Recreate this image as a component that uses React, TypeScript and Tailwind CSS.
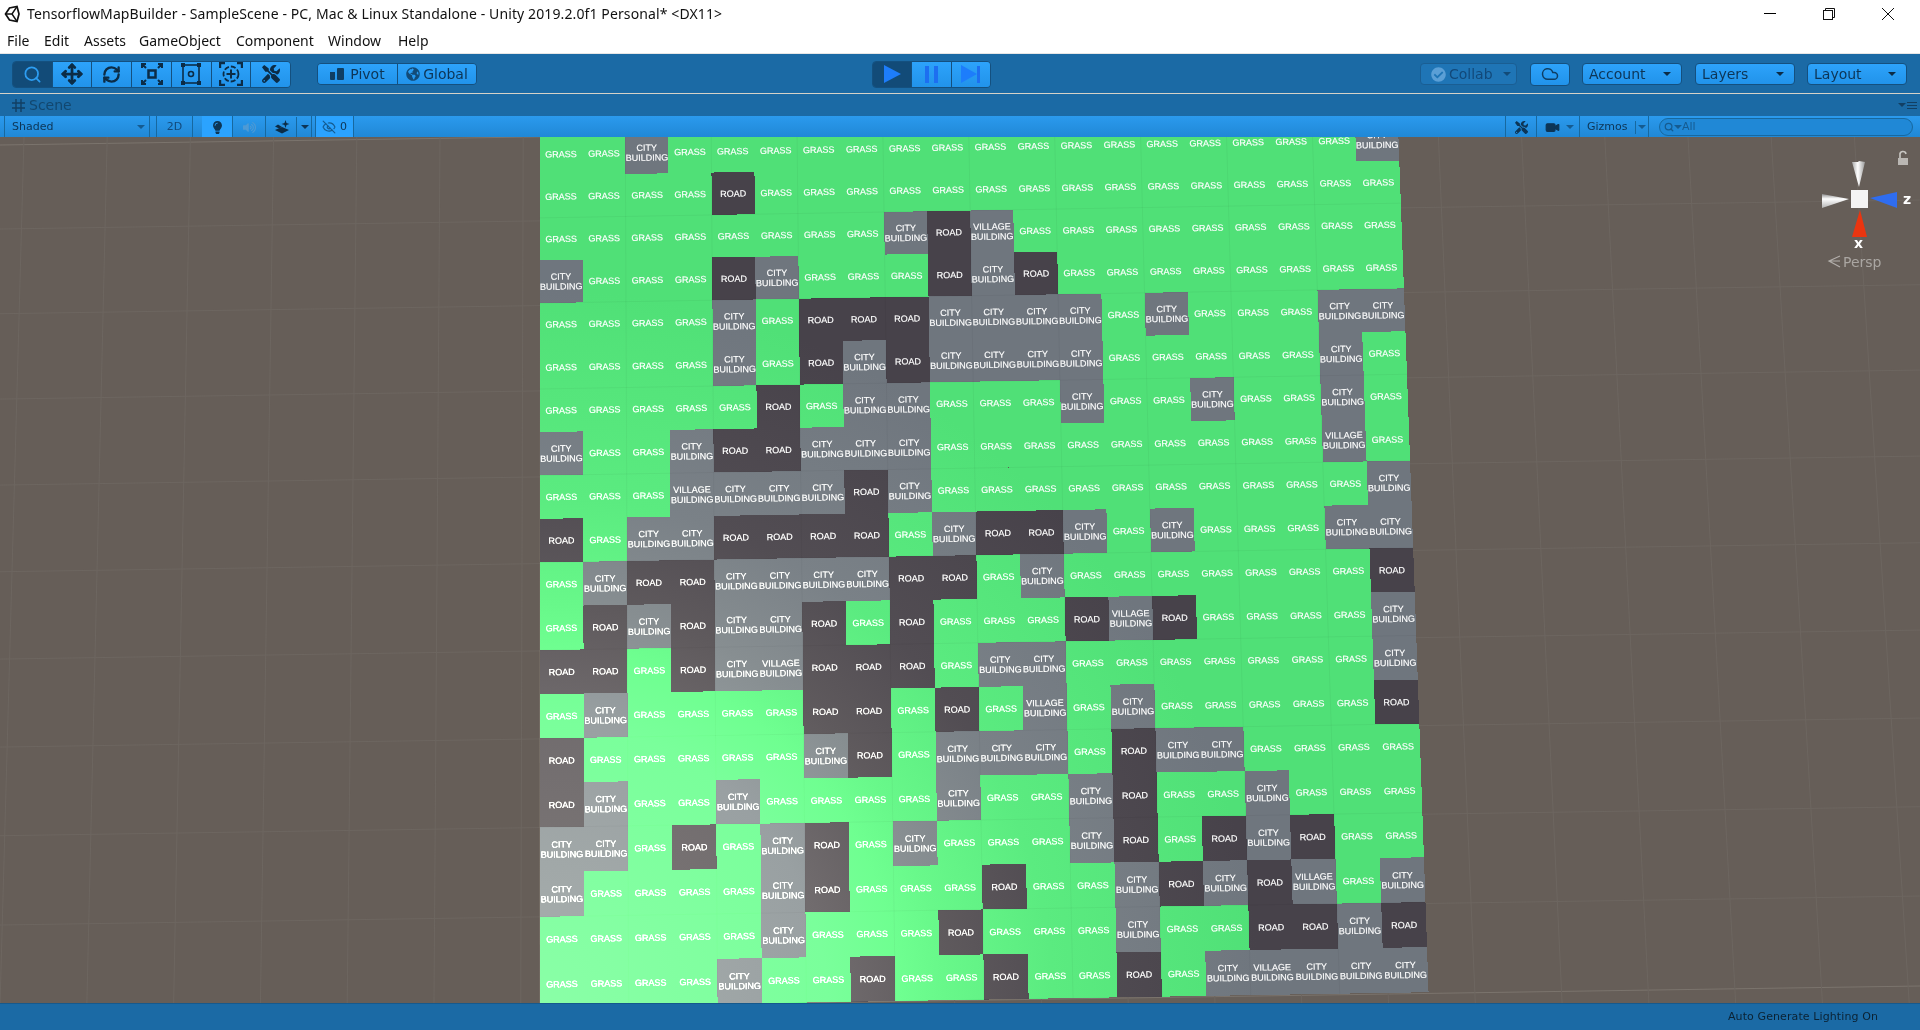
import { Cloud, EyeOff, Move, RefreshCw, Search, Video } from 'lucide-react';
import { FaCheckCircle, FaGlobeAmericas, FaLightbulb, FaTools, FaVolumeUp } from 'react-icons/fa';
import type { ReactNode } from 'react';

const MAP = [
  'GGCGGGGGGGGGGGGGGGGC',
  'GGGGRGGGGGGGGGGGGGGG',
  'GGGGGGGGCRVGGGGGGGGG',
  'CGGGRCGGGRCRGGGGGGGG',
  'GGGGCGRRRCCCCGCGGGCC',
  'GGGGCGRCRCCCCGGGGGCG',
  'GGGGGRGCCGGGCGGCGGCG',
  'CGGCRRCCCGGGGGGGGGVG',
  'GGGVCCCRCGGGGGGGGGGC',
  'RGCCRRRRGCRRCGCGGGCC',
  'GCRRCCCCRRGCGGGGGGGR',
  'GRCRCCRGRGGGRVRGGGGC',
  'RRGRCVRRRGCCGGGGGGGC',
  'GCGGGGRRGRGVGCGGGGGR',
  'RGGGGGCRGCCCGRCCGGGG',
  'RCGGCGGGGCGGCRGGCGGG',
  'CCGRGCRGCGGGCRGRCRGG',
  'CGGGGCRGGGRGGCRCRVGC',
  'GGGGGCGGGRGGGCGGRRCR',
  'GGGGCGGRGGRGGRGCVCCC',
];

const TILE_FILL: Record<string, string> = {
  G: '#50e077',
  C: '#6f767e',
  V: '#6f767e',
  R: '#47424a',
};

const TILE_LABEL: Record<string, string[]> = {
  G: ['GRASS'],
  C: ['CITY', 'BUILDING'],
  V: ['VILLAGE', 'BUILDING'],
  R: ['ROAD'],
};

// fitted against the reference: rows spread out slightly towards the camera
function gridPoint(r: number, c: number) {
  const width = 42.95 + (1.45 * r) / 19;
  return {
    x: 561 + r / 19 + c * width,
    y: 154 + 42.24 * r + 0.076 * r * r - (14 * c) / 19,
  };
}

function quad(r: number, c: number, rows = 1, cols = 1) {
  const corners = [
    gridPoint(r - 0.5, c - 0.5),
    gridPoint(r - 0.5, c - 0.5 + cols),
    gridPoint(r - 0.5 + rows, c - 0.5 + cols),
    gridPoint(r - 0.5 + rows, c - 0.5),
  ];
  return corners.map((p) => `${p.x},${p.y}`).join(' ');
}

function FloorLines() {
  const rows = Array.from({ length: 11 }, (_, n) => 145 + 83.7 * n + 0.33 * n * n);
  const cols = Array.from({ length: 23 }, (_, n) => 24 + 83.2 * n);
  return (
    <g>
      {rows.map((y, n) => (
        <line key={n} x1={0} y1={y} x2={1920} y2={y - 29} stroke={n % 10 === 0 ? '#7b746d' : '#6d6660'} strokeWidth={1} />
      ))}
      {cols.map((x, n) => (
        <line key={n} x1={x} y1={137} x2={x + (x - 580) * 0.043} y2={1003} stroke="#6d6660" strokeWidth={1} />
      ))}
    </g>
  );
}

function MapTiles() {
  const tiles = MAP.flatMap((row, r) => row.split('').map((kind, c) => ({ kind, r, c })));
  const seams = Array.from({ length: 9 }, (_, n) => 1.5 + n * 2);
  return (
    <g>
      {tiles.map(({ kind, r, c }) => (
        <polygon key={`${r}-${c}`} points={quad(r, c)} fill={TILE_FILL[kind]} shapeRendering="crispEdges" />
      ))}
      {seams.map((n) => {
        const a = gridPoint(-0.5, n);
        const b = gridPoint(19.5, n);
        const d = gridPoint(n, -0.5);
        const e = gridPoint(n, 19.5);
        return (
          <g key={n} stroke="#000" strokeOpacity={0.04}>
            <line x1={a.x} y1={a.y} x2={b.x} y2={b.y} />
            <line x1={d.x} y1={d.y} x2={e.x} y2={e.y} />
          </g>
        );
      })}
      {tiles.map(({ kind, r, c }) => {
        const { x, y } = gridPoint(r, c);
        const lines = TILE_LABEL[kind];
        return (
          <text
            key={`${r}-${c}`}
            transform={`rotate(-1 ${x} ${y})`}
            textAnchor="middle"
            className="fill-white stroke-white stroke-[0.15px] text-[9px]"
          >
            {lines.map((line, i) => (
              <tspan key={line} x={x} y={lines.length === 1 ? y + 3.3 : y - 1.8 + i * 10}>
                {line}
              </tspan>
            ))}
          </text>
        );
      })}
      <polygon points={quad(0, 0, 20, 20)} fill="url(#floor-light)" className="mix-blend-plus-lighter" />
    </g>
  );
}

function SceneView() {
  return (
    <div className="relative h-[866px] overflow-hidden bg-[#665e58]">
      <svg viewBox="0 137 1920 866" className="block h-[866px] w-[1920px] font-['Liberation_Sans',sans-serif]">
        <defs>
          <radialGradient id="floor-light" gradientUnits="userSpaceOnUse" cx={540} cy={1010} r={900}>
            <stop offset="0" stopColor="#3a3a30" />
            <stop offset="0.32" stopColor="#2a2a24" />
            <stop offset="0.45" stopColor="#181813" />
            <stop offset="0.57" stopColor="#0b0b09" />
            <stop offset="0.8" stopColor="#000000" />
          </radialGradient>
        </defs>
        <FloorLines />
        <MapTiles />
      </svg>
      <SceneGizmo />
    </div>
  );
}

function SceneGizmo() {
  return (
    <div className="absolute right-0 top-0 h-[140px] w-[100px] font-['DejaVu_Sans',sans-serif]">
      <svg viewBox="0 0 100 140" className="absolute inset-0 h-[140px] w-[100px]">
        <defs>
          <linearGradient id="cone-h" x1="0" y1="0" x2="0" y2="1">
            <stop offset="0" stopColor="#8f8f8f" />
            <stop offset="0.35" stopColor="#ffffff" />
            <stop offset="1" stopColor="#b5b5b5" />
          </linearGradient>
          <linearGradient id="cone-v" x1="0" y1="0" x2="1" y2="0">
            <stop offset="0" stopColor="#a8a8a8" />
            <stop offset="0.45" stopColor="#ffffff" />
            <stop offset="1" stopColor="#9a9a9a" />
          </linearGradient>
        </defs>
        <path d="M32 25 L38 25 L39 24 L45 25 L39 50 Z" fill="url(#cone-v)" />
        <path d="M2 57 L29 62 L2 71 L2 57 Z" fill="url(#cone-h)" />
        <rect x="31" y="53" width="17" height="18" fill="#f4f4f4" />
        <path d="M50 61 L77 55 L77 71 Z" fill="#2f6df0" />
        <path d="M40 73 L47 100 L32 100 Z" fill="#ea3510" />
        <g fill="#c9c7c3" opacity="0.85">
          <rect x="78" y="21" width="10" height="7" />
        </g>
        <path d="M80 21 V18 a3 3 0 0 1 6 -1" fill="none" stroke="#c9c7c3" strokeWidth="1.6" />
        <path d="M20 119 L9 124 L20 130 M20 124 L9 124" fill="none" stroke="#b2aeaa" strokeWidth="1.2" />
      </svg>
      <span className="absolute left-[83px] top-[55px] text-[14px] font-bold leading-[14px] text-white">z</span>
      <span className="absolute left-[34px] top-[99px] text-[14px] font-bold leading-[14px] text-white">x</span>
      <span className="absolute left-[23px] top-[118px] text-[14px] leading-[14px] text-[#aaa6a2]">Persp</span>
    </div>
  );
}

function UnityLogo() {
  return (
    <svg viewBox="0 0 16 18" className="h-[18px] w-[16px]" fill="none" stroke="#111" strokeWidth="1.7">
      <path d="M1.5 9 L5.5 3 L13 1.5 L15 9 L13 16.5 L5.5 15 Z" />
      <path d="M1.5 9 H8 L13 1.5 M8 9 L13 16.5" strokeWidth="1.4" />
    </svg>
  );
}

function ScaleIcon() {
  return (
    <svg viewBox="0 0 22 22" className="h-[22px] w-[22px]" fill="none" stroke="#0c2c46" strokeWidth="2">
      <rect x="7.5" y="7.5" width="7" height="7" strokeWidth="2.5" />
      <path d="M5 5 L1.5 1.5 M1 5 V1 H5 M17 5 L20.5 1.5 M17 1 H21 V5 M5 17 L1.5 20.5 M1 17 V21 H5 M17 17 L20.5 20.5 M21 17 V21 H17" />
    </svg>
  );
}

function RectIcon() {
  return (
    <svg viewBox="0 0 22 22" className="h-[22px] w-[22px]" fill="none" stroke="#0c2c46" strokeWidth="1.6">
      <rect x="3" y="2" width="16" height="18" />
      <circle cx="11" cy="11" r="2.5" />
      <g fill="#0c2c46" stroke="none">
        <rect x="1" y="0" width="4" height="4" />
        <rect x="17" y="0" width="4" height="4" />
        <rect x="1" y="18" width="4" height="4" />
        <rect x="17" y="18" width="4" height="4" />
      </g>
    </svg>
  );
}

function TransformIcon() {
  return (
    <svg viewBox="0 0 24 24" className="h-[24px] w-[24px]" fill="none" stroke="#0c2c46" strokeWidth="1.8">
      <circle cx="12" cy="12" r="7.5" strokeDasharray="5 2" />
      <path d="M12 7.5 V16.5 M7.5 12 H16.5" strokeWidth="2" />
      <path d="M1 6 V1 H6 M18 1 H23 V6 M1 18 V23 H6 M23 18 V23 H18" strokeWidth="2.4" />
    </svg>
  );
}

function PivotIcon() {
  return (
    <span className="flex items-end gap-[2px]">
      <span className="h-[8px] w-[5px] rounded-b-[1px] bg-[#0f3e63]" />
      <span className="h-[12px] w-[7px] rounded-[1px] bg-[#0f3e63]" />
    </span>
  );
}

function EffectsIcon() {
  return (
    <svg viewBox="0 0 16 14" className="h-[14px] w-[16px]" fill="#0c2c46">
      <path d="M8 7 L15 10 L8 13.5 L1 10 Z" />
      <path d="M4 4.5 L1 6.5 L5 8.5 L8 7 Z" />
      <path d="M11.5 0 L12.5 3 L15.5 4 L12.5 5 L11.5 8 L10.5 5 L7.5 4 L10.5 3 Z" />
    </svg>
  );
}

function Caret({ className }: { className?: string }) {
  return <span className={`h-0 w-0 border-x-[4px] border-t-[4px] border-x-transparent ${className ?? 'border-t-[#0c2c46]'}`} />;
}

function ToolButton({ active, children, last }: { active?: boolean; children: ReactNode; last?: boolean }) {
  return (
    <div
      className={`flex h-full flex-1 items-center justify-center ${last ? '' : 'border-r border-[#14507f]'} ${
        active ? 'bg-[#124b78]' : 'bg-gradient-to-b from-[#2da3fb] to-[#2193ea]'
      }`}
    >
      {children}
    </div>
  );
}

function MainToolbar() {
  return (
    <div className="flex h-[39px] items-center bg-[#1b6aa5] pt-[1px] font-['DejaVu_Sans',sans-serif]">
      <div className="flex w-[872px] items-center pl-[12px]">
        <div className="flex h-[27px] w-[279px] overflow-hidden rounded-[4px] border border-[#14507f]">
          <ToolButton active>
            <Search size={19} strokeWidth={2.2} className="text-[#2d9df2]" />
          </ToolButton>
          <ToolButton>
            <Move size={22} strokeWidth={3} className="text-[#0c2c46]" />
          </ToolButton>
          <ToolButton>
            <RefreshCw size={19} strokeWidth={3} className="text-[#0c2c46]" />
          </ToolButton>
          <ToolButton>
            <ScaleIcon />
          </ToolButton>
          <ToolButton>
            <RectIcon />
          </ToolButton>
          <ToolButton>
            <TransformIcon />
          </ToolButton>
          <ToolButton last>
            <FaTools size={18} className="text-[#0c2c46]" />
          </ToolButton>
        </div>
        <div className="ml-[26px] flex h-[22px] w-[160px] overflow-hidden rounded-[4px] border border-[#14507f] text-[14px] text-[#0d3556]">
          <div className="flex w-[80px] items-center justify-center gap-[6px] border-r border-[#14507f] bg-gradient-to-b from-[#2da3fb] to-[#2193ea]">
            <PivotIcon />
            Pivot
          </div>
          <div className="flex flex-1 items-center justify-center gap-[3px] bg-gradient-to-b from-[#2da3fb] to-[#2193ea]">
            <FaGlobeAmericas size={14} className="text-[#124b78]" />
            Global
          </div>
        </div>
      </div>
      <div className="flex h-[27px] w-[119px] overflow-hidden rounded-[4px] border border-[#14507f]">
        <ToolButton active>
          <span className="h-0 w-0 border-y-[9px] border-l-[17px] border-y-transparent border-l-[#1d7dfb]" />
        </ToolButton>
        <ToolButton>
          <span className="flex gap-[5px]">
            <span className="h-[17px] w-[4px] bg-[#1d6ff0]" />
            <span className="h-[17px] w-[4px] bg-[#1d6ff0]" />
          </span>
        </ToolButton>
        <ToolButton last>
          <span className="flex items-center">
            <span className="h-0 w-0 border-y-[9px] border-l-[16px] border-y-transparent border-l-[#1d7dfb]" />
            <span className="h-[17px] w-[3px] bg-[#1d6ff0]" />
          </span>
        </ToolButton>
      </div>
      <div className="flex flex-1 items-center justify-end pr-[13px] text-[14px] text-[#0d3556]">
        <div className="flex h-[22px] w-[97px] items-center gap-[3px] rounded-[4px] border border-[#1a5e93] bg-[#1f75b6] pl-[10px] text-[#12497a]">
          <FaCheckCircle size={15} className="text-[#5b9fd6]" />
          Collab
          <Caret className="ml-[7px] border-t-[#124b78]" />
        </div>
        <div className="ml-[13px] flex h-[23px] w-[40px] items-center justify-center rounded-[4px] border border-[#14507f] bg-gradient-to-b from-[#2da3fb] to-[#2193ea]">
          <Cloud size={18} className="text-[#0f3e63]" />
        </div>
        <DropButton label="Account" className="ml-[12px]" />
        <DropButton label="Layers" className="ml-[13px]" />
        <DropButton label="Layout" className="ml-[12px]" />
      </div>
    </div>
  );
}

function DropButton({ label, className }: { label: string; className: string }) {
  return (
    <div
      className={`flex h-[22px] w-[100px] items-center justify-between rounded-[4px] border border-[#14507f] bg-gradient-to-b from-[#2da3fb] to-[#2193ea] pl-[6px] pr-[10px] ${className}`}
    >
      {label}
      <Caret />
    </div>
  );
}

function SceneTab() {
  return (
    <div className="flex h-[23px] items-center justify-between border-t border-[#d6d2c8] bg-[#1b6aa5] pl-[12px] pr-[3px] font-['DejaVu_Sans',sans-serif] text-[14px] text-[#12476f]">
      <div className="flex items-center gap-[4px]">
        <svg viewBox="0 0 13 13" className="h-[13px] w-[13px]" stroke="#123f63" strokeWidth="1.4">
          <path d="M4 0 V13 M9 0 V13 M0 4 H13 M0 9 H13" />
        </svg>
        Scene
      </div>
      <div className="flex items-center gap-[1px]">
        <Caret className="border-t-[#123f63]" />
        <span className="flex h-[7px] w-[10px] flex-col justify-between">
          <span className="h-px bg-[#123f63]" />
          <span className="h-px bg-[#123f63]" />
          <span className="h-px bg-[#123f63]" />
        </span>
      </div>
    </div>
  );
}

function SceneToolbar() {
  const cell = 'flex h-full items-center border-r border-[#17689f] pt-[1px]';
  return (
    <div className="flex h-[21px] items-stretch bg-gradient-to-b from-[#2b9aee] to-[#2088d6] font-['DejaVu_Sans',sans-serif] text-[11px] text-[#0d3556]">
      <div className={`${cell} ml-[4px] w-[146px] justify-between border-l pl-[7px] pr-[4px]`}>
        Shaded
        <Caret className="border-t-[#155b90]" />
      </div>
      <div className={`${cell} ml-[6px] w-[37px] justify-center border-l text-[#12497a]`}>2D</div>
      <div className={`${cell} ml-[9px] w-[31px] justify-center bg-[#2ba3ff]`}>
        <FaLightbulb size={13} className="text-[#0d3556]" />
      </div>
      <div className={`${cell} w-[33px] justify-center`}>
        <FaVolumeUp size={13} className="text-[#4f9ad4]" />
      </div>
      <div className={`${cell} w-[46px] pl-[8px]`}>
        <EffectsIcon />
        <span className="ml-[6px] h-full border-l border-[#17689f]" />
        <Caret className="ml-[4px] border-t-[#0d3556]" />
      </div>
      <div className={`${cell} ml-[3px] w-[39px] justify-center gap-[4px] border-l bg-[#2ba3ff]`}>
        <EyeOff size={14} className="text-[#155b90]" />0
      </div>
      <div className="flex-1" />
      <div className={`${cell} w-[32px] justify-center border-l`}>
        <FaTools size={13} className="text-[#0d3556]" />
      </div>
      <div className={`${cell} w-[43px] gap-[6px] pl-[8px]`}>
        <Video size={15} fill="#0d3556" className="text-[#0d3556]" />
        <Caret className="border-t-[#155b90]" />
      </div>
      <div className={`${cell} w-[69px] pl-[7px]`}>
        Gizmos
        <span className="ml-[7px] h-[13px] border-l border-[#17689f]" />
        <Caret className="ml-[2px] border-t-[#155b90]" />
      </div>
      <div className="ml-[10px] mr-[7px] flex w-[254px] items-center">
        <div className="flex h-[18px] w-full items-center rounded-full border border-[#17689f] bg-[#2088d6] pl-[4px] pt-[1px] text-[#155b90]">
          <Search size={10} strokeWidth={3} />
          <Caret className="border-t-[#155b90]" />
          All
        </div>
      </div>
    </div>
  );
}

export default function App() {
  return (
    <div className="flex h-[1030px] w-[1920px] flex-col overflow-hidden bg-white">
      <div className="flex h-[27px] items-center pl-[4px] font-['Noto_Sans',sans-serif] text-[14px] text-[#111]">
        <UnityLogo />
        <span className="ml-[7px] tracking-[0.115px]">
          TensorflowMapBuilder - SampleScene - PC, Mac &amp; Linux Standalone - Unity 2019.2.0f1 Personal* &lt;DX11&gt;
        </span>
        <div className="ml-auto flex pr-[3px]">
          <div className="flex h-[27px] w-[59px] items-center justify-center">
            <span className="h-px w-[12px] bg-black" />
          </div>
          <div className="flex h-[27px] w-[59px] items-center justify-center">
            <svg viewBox="0 0 12 12" className="h-[12px] w-[12px]" fill="none" stroke="#111">
              <rect x="0.5" y="2.5" width="9" height="9" />
              <path d="M2.5 2.5 V0.5 H11.5 V9.5 H9.5" />
            </svg>
          </div>
          <div className="flex h-[27px] w-[59px] items-center justify-center">
            <svg viewBox="0 0 12 12" className="h-[12px] w-[12px]" stroke="#111">
              <path d="M0 0 L12 12 M12 0 L0 12" />
            </svg>
          </div>
        </div>
      </div>
      <div className="flex h-[27px] items-center border-b border-[#e6e6e6] pl-[7px] pt-[1px] font-['Noto_Sans',sans-serif] text-[14px] text-[#111]">
        <span className="w-[37px]">File</span>
        <span className="w-[40px]">Edit</span>
        <span className="w-[55px]">Assets</span>
        <span className="w-[97px]">GameObject</span>
        <span className="w-[92px]">Component</span>
        <span className="w-[70px]">Window</span>
        <span>Help</span>
      </div>
      <MainToolbar />
      <SceneTab />
      <SceneToolbar />
      <SceneView />
      <div className="flex h-[27px] items-center justify-end border-t border-[#17598c] bg-[#1b6aa5] pr-[42px] font-['DejaVu_Sans',sans-serif] text-[11px] tracking-[0.1px] text-[#0b2233]">
        Auto Generate Lighting On
      </div>
    </div>
  );
}
